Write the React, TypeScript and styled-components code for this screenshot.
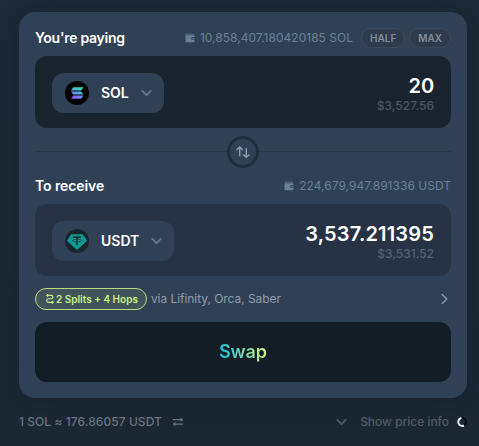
import React from 'react';
import styled, { createGlobalStyle } from 'styled-components';

const Global = createGlobalStyle`
  *, *::before, *::after { box-sizing: border-box; }
  body { margin: 0; background: #1c2936; }
  button { font: inherit; color: inherit; border: 0; padding: 0; background: none; }
  svg { display: block; flex: none; }
`;

const Page = styled.main`
  width: 479px;
  height: 446px;
  padding: 12px 12px 0 19px;
  overflow: hidden;
  background: linear-gradient(180deg, #1d2a37 0%, #1d2a36 60%, #1c2734 100%);
  font-family: Inter, sans-serif;
  font-size: 14px;
  line-height: 20px;
  white-space: nowrap;
`;

const Card = styled.section`
  display: flex;
  flex-direction: column;
  width: 448px;
  height: 386px;
  padding: 16px;
  border-radius: 16px;
  background: #304156;
  box-shadow: 0 4px 24px -4px rgba(10, 18, 24, 0.35);
`;

const FieldHeader = styled.div`
  display: flex;
  align-items: center;
  justify-content: space-between;
  height: 20px;
  margin-bottom: 8px;
`;

const Label = styled.h2<{ $tracking: number }>`
  margin: 0;
  font-size: 14px;
  line-height: 20px;
  font-weight: 600;
  letter-spacing: ${(p) => p.$tracking}px;
  color: #fff;
`;

const Balance = styled.div`
  display: flex;
  align-items: center;
  color: #6a8093;
  font-size: 12px;
  letter-spacing: 0.02px;
`;

const Amount = styled.span`
  margin-left: 5px;
`;

const PresetButton = styled.button`
  height: 20px;
  margin-left: 8px;
  padding: 0 8px;
  border: 1px solid #3d4a5a;
  border-radius: 10px;
  background: #2d3b4d;
  color: #848c97;
  font-size: 10px;
  line-height: 18px;
  font-weight: 600;

  & + & { margin-left: 4px; }
`;

const Field = styled.div<{ $tone: string }>`
  display: flex;
  align-items: center;
  justify-content: space-between;
  height: 72px;
  padding: 2px 17px 0;
  border-radius: 12px;
  background: ${(p) => p.$tone};
`;

const TokenButton = styled.button`
  display: flex;
  align-items: center;
  height: 40px;
  padding: 0 12px 0 13px;
  border-radius: 12px;
  background: #304156;
`;

const TokenName = styled.span`
  margin: 0 12px;
  color: #fff;
  font-size: 14px;
  font-weight: 600;
`;

const Values = styled.div`
  display: flex;
  flex-direction: column;
  align-items: flex-end;
  padding-top: 1px;
`;

const Value = styled.div<{ $tracking: number }>`
  height: 22px;
  color: #fff;
  font-size: 20px;
  line-height: 22px;
  font-weight: 600;
  letter-spacing: ${(p) => p.$tracking}px;
`;

const Fiat = styled.div<{ $color: string }>`
  height: 16px;
  color: ${(p) => p.$color};
  font-size: 12px;
  line-height: 17px;
  font-weight: 500;
`;

const Divider = styled.div`
  display: flex;
  align-items: center;
  height: 32px;
  margin: 8px 0;
`;

const Line = styled.span`
  flex: 1;
  height: 1px;
  margin-bottom: 1px;
  background: #28374a;
`;

const FlipButton = styled.button`
  display: grid;
  place-items: center;
  width: 32px;
  height: 32px;
  border: 3px solid #212d3a;
  border-radius: 50%;
  color: #949da8;
`;

const Route = styled.div`
  display: flex;
  align-items: center;
  height: 22px;
  margin: 12px 0;
  padding-right: 3px;
`;

const RouteBadge = styled.div`
  display: flex;
  align-items: center;
  gap: 2px;
  height: 22px;
  padding: 0 8px 0 10px;
  border: 1px solid #b7dc82;
  border-radius: 11px;
  background: #42545b;
  color: #c7f284;
  font-size: 10px;
  font-weight: 600;
`;

const Via = styled.span`
  flex: 1;
  margin-left: 4px;
  color: #929ba8;
  font-size: 12px;
  letter-spacing: -0.05px;
`;

const SwapButton = styled.button`
  display: grid;
  place-items: center;
  height: 60px;
  border-radius: 12px;
  background: #131d26;
`;

const SwapText = styled.span`
  color: transparent;
  background: linear-gradient(247.44deg, #c7f284 13.88%, #00bef0 99.28%);
  background-clip: text;
  -webkit-background-clip: text;
  font-size: 18px;
  line-height: 24px;
  font-weight: 600;
  letter-spacing: -0.1px;
`;

const Footer = styled.footer`
  display: flex;
  align-items: center;
  width: 448px;
  height: 20px;
  margin-top: 14px;
  color: #6a737e;
  font-size: 12px;
  font-weight: 500;
`;

const Rate = styled.span`
  margin-right: 10px;
  letter-spacing: 0.06px;
`;

const InfoToggle = styled.button`
  display: flex;
  align-items: center;
  margin-left: auto;
  color: #505b66;
`;

const InfoText = styled.span`
  margin: 0 8px 0 13px;
  letter-spacing: -0.03px;
`;

const Wallet = () => (
  <svg width="10" height="10" viewBox="0 0 10 10" fill="#6a8093">
    <path d="M1 .8h7.2a.8.8 0 0 1 .8.8H.5Q.5.8 1 .8Z" />
    <path d="M.5 2.2h8.3a.7.7 0 0 1 .7.7v1.2H7.4a1.5 1.5 0 0 0 0 3h2.1v1.3a.8.8 0 0 1-.8.8H1.3a.8.8 0 0 1-.8-.8Z" />
    <path d="M7.4 4.7h2.1v1.8H7.4a.9.9 0 0 1 0-1.8Z" opacity=".65" />
  </svg>
);

const Chevron = ({ color, right = false }: { color: string; right?: boolean }) => (
  <svg width={right ? 7 : 11} height={right ? 12 : 8} viewBox={right ? '0 0 7 12' : '0 0 11 8'} fill="none" stroke={color} strokeWidth={right ? 1.4 : 1.9} strokeLinecap="round" strokeLinejoin="round">
    <path d={right ? 'M1.2 1.6 5.8 6l-4.6 4.4' : 'M1.3 1.9 5.5 6.1l4.2-4.2'} />
  </svg>
);

const SolIcon = () => (
  <svg width="24" height="24" viewBox="0 0 24 24">
    <defs>
      <linearGradient id="sol" gradientUnits="userSpaceOnUse" x1="15.5" y1="6" x2="9" y2="18">
        <stop stopColor="#1cf0a8" />
        <stop offset=".5" stopColor="#5f9fe6" />
        <stop offset="1" stopColor="#9a4cff" />
      </linearGradient>
    </defs>
    <circle cx="12" cy="12" r="12" fill="#000" />
    <g fill="url(#sol)">
      <path d="M8.2 6.3h10.2l-2.2 3.1H6Z" />
      <path d="M6 10.4h10.2l2.2 3.1H8.2Z" />
      <path d="M8.2 14.6h10.2l-2.2 3.1H6Z" />
    </g>
  </svg>
);

const UsdtIcon = () => (
  <svg width="24" height="24" viewBox="0 0 24 24">
    <circle cx="12" cy="12" r="12" fill="#1b252e" />
    <path d="M6.2 5.2h11.6L22 11.8 12 21 2 11.8Z" fill="#079b94" />
    <path d="M7.8 7.3h8.4v1.6h-3.4v7h-1.6v-7H7.8Z" fill="#1b2f36" />
    <ellipse cx="12" cy="11.6" rx="4.8" ry="1.3" fill="none" stroke="#1b3c42" strokeWidth=".8" />
  </svg>
);

const FlipIcon = () => (
  <svg width="16" height="16" viewBox="0 0 16 16" fill="none" stroke="currentColor" strokeWidth="1.4">
    <path d="M4.7 12.3V3M1.6 5.9l3.1-3 3.1 3M11.3 4.2v9.1M8.2 10.4l3.1 3 3.1-3" />
  </svg>
);

const RouteIcon = () => (
  <svg width="8" height="10" viewBox="0 0 8 10" fill="none" stroke="currentColor" strokeWidth="1.1">
    <path d="M.8 1.4h4.4a1.7 1.7 0 0 1 0 3.4H2.5a1.8 1.8 0 0 0 0 3.6h4.8M5.9 6.9l1.5 1.5-1.5 1.2M2 .2.7 1.4 2 2.6" />
  </svg>
);

const ExchangeIcon = () => (
  <svg width="12" height="10" viewBox="0 0 12 10" fill="none" stroke="currentColor" strokeWidth="1.2">
    <path d="M.7 2.7h9.6M11.2 7.1H1.7" />
    <path d="m8.5.5 2.9 2.2-2.9 2.2ZM3.4 4.9.6 7.1l2.8 2.2Z" fill="currentColor" stroke="none" />
  </svg>
);

const ProgressRing = () => (
  <svg width="10" height="10" viewBox="0 0 10 10" fill="none" strokeWidth="2">
    <circle cx="5" cy="5" r="4" stroke="#05080b" />
    <path d="M4.4 1A4 4 0 1 0 7 8.5" stroke="#e8eaec" />
  </svg>
);

export default function App() {
  return (
    <>
      <Global />
      <Page>
        <Card>
          <FieldHeader>
            <Label $tracking={-0.27}>You're paying</Label>
            <Balance>
              <Wallet />
              <Amount>10,858,407.180420185 SOL</Amount>
              <PresetButton>HALF</PresetButton>
              <PresetButton>MAX</PresetButton>
            </Balance>
          </FieldHeader>
          <Field $tone="#1a242e">
            <TokenButton>
              <SolIcon />
              <TokenName>SOL</TokenName>
              <Chevron color="#6b7785" />
            </TokenButton>
            <Values>
              <Value $tracking={-0.1}>20</Value>
              <Fiat $color="#4c555e">$3,527.56</Fiat>
            </Values>
          </Field>
          <Divider>
            <Line />
            <FlipButton aria-label="Switch tokens"><FlipIcon /></FlipButton>
            <Line />
          </Divider>
          <FieldHeader>
            <Label $tracking={-0.1}>To receive</Label>
            <Balance>
              <Wallet />
              <Amount>224,679,947.891336 USDT</Amount>
            </Balance>
          </FieldHeader>
          <Field $tone="#273345">
            <TokenButton>
              <UsdtIcon />
              <TokenName>USDT</TokenName>
              <Chevron color="#6b7785" />
            </TokenButton>
            <Values>
              <Value $tracking={0.18}>3,537.211395</Value>
              <Fiat $color="#566170">$3,531.52</Fiat>
            </Values>
          </Field>
          <Route>
            <RouteBadge><RouteIcon />2 Splits + 4 Hops</RouteBadge>
            <Via>via Lifinity, Orca, Saber</Via>
            <Chevron color="#8d97a4" right />
          </Route>
          <SwapButton><SwapText>Swap</SwapText></SwapButton>
        </Card>
        <Footer>
          <Rate>1 SOL ≈ 176.86057 USDT</Rate>
          <ExchangeIcon />
          <InfoToggle>
            <Chevron color="#505b66" />
            <InfoText>Show price info</InfoText>
            <ProgressRing />
          </InfoToggle>
        </Footer>
      </Page>
    </>
  );
}
